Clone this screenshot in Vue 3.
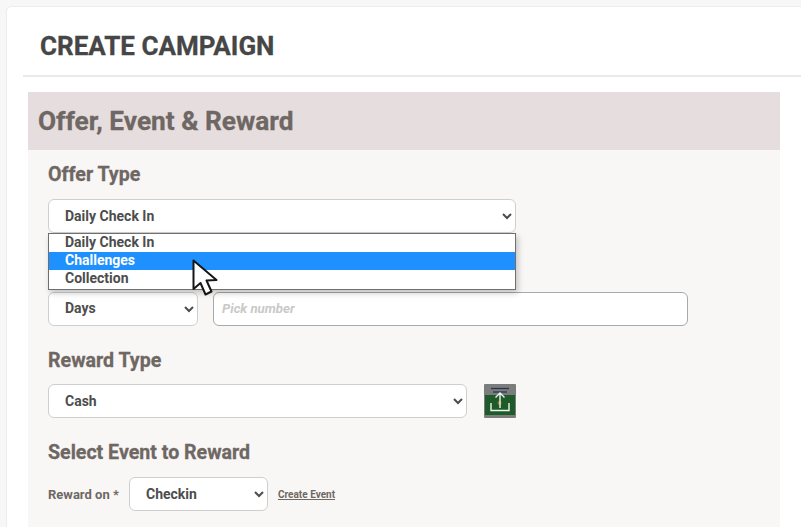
<script setup>
import { ref } from 'vue'

const offerTypes = ref(['Daily Check In', 'Challenges', 'Collection'])
const hovered = ref(1)
</script>

<template>
  <div class="page">
    <div class="card">
      <h1 class="title">CREATE CAMPAIGN</h1>

      <section class="panel">
        <h2 class="panel-head">Offer, Event &amp; Reward</h2>

        <div class="panel-body">
          <h3 class="label">Offer Type</h3>
          <div class="offer-wrap">
            <select class="ctl offer">
              <option>Daily Check In</option>
            </select>
            <ul class="menu">
              <li v-for="(o, i) in offerTypes" :key="o" :class="{ on: i === hovered }">{{ o }}</li>
            </ul>
            <svg class="cursor" width="26" height="37" viewBox="0 0 26 37">
              <path d="M1.5 1.5 L1.5 30 L8.5 24 L13.5 35.5 L19.5 32.5 L14.5 21.5 L24.5 21 Z" fill="#fff" stroke="#161616" stroke-width="2" stroke-linejoin="round" />
            </svg>
          </div>

          <div class="row days-row">
            <select class="ctl days">
              <option>Days</option>
            </select>
            <input class="ctl pick" type="text" placeholder="Pick number" />
          </div>

          <h3 class="label reward-label">Reward Type</h3>
          <div class="row reward-row">
            <select class="ctl reward">
              <option>Cash</option>
            </select>
            <svg class="upload" width="32" height="34" viewBox="0 0 32 34">
              <rect width="32" height="34" rx="1" fill="#7b7d7c" />
              <rect x="1" y="11" width="30" height="20" fill="#1d5c2a" />
              <path d="M7 4.5H25" stroke="#2a3550" stroke-width="1.3" />
              <path d="M9 8H23" stroke="#2a3550" stroke-width="1.3" />
              <circle cx="15.5" cy="19" r="2" fill="#8f7a22" />
              <path d="M16 24V9M11.5 13.5L16 9L20.5 13.5" fill="none" stroke="#f2f2ee" stroke-width="1.4" />
              <path d="M7 19V26.5H25V19" fill="none" stroke="#f2f2ee" stroke-width="1.4" />
            </svg>
          </div>

          <h3 class="label event-label">Select Event to Reward</h3>
          <div class="row event-row">
            <span class="small">Reward on *</span>
            <select class="ctl checkin">
              <option>Checkin</option>
            </select>
            <a class="create" href="#">Create Event</a>
          </div>
        </div>
      </section>
    </div>
  </div>
</template>

<style>
html, body {
  background: #f7f7f7;
}
</style>

<style scoped>
.page {
  height: 527px;
  overflow: hidden;
  padding: 6px 0 0 6px;
  box-sizing: border-box;
  font-family: Roboto, "Liberation Sans", sans-serif;
}
.card {
  height: 540px;
  background: #fff;
  border: 1px solid #ebecf1;
  border-radius: 5px;
  padding: 0 15px 0 16px;
  margin-right: -20px;
}
.title {
  margin: 0 0 0 17px;
  font-size: 26px;
  line-height: 29px;
  padding: 25px 0 14px;
  font-weight: 700;
  color: #464646;
  -webkit-text-stroke: 0.3px #464646;
}
.panel {
  border-top: 2px solid #e8eaee;
  padding: 15px 0 0 5px;
}
.panel-head {
  margin: 0;
  width: 742px;
  height: 58px;
  padding-left: 10px;
  background: #e6dede;
  font-size: 26.25px;
  line-height: 59px;
  font-weight: 700;
  color: #6e6763;
  -webkit-text-stroke: 0.3px #6e6763;
}
.panel-body {
  width: 732px;
  height: 400px;
  padding: 1px 0 0 20px;
  background: #f9f7f6;
}
.label {
  margin: 12px 0 0;
  font-size: 19.6px;
  line-height: 24px;
  font-weight: 700;
  color: #6e6763;
  -webkit-text-stroke: 0.3px #6e6763;
}
.ctl {
  box-sizing: border-box;
  height: 34px;
  background-color: #fff;
  border: 1px solid #cfcfcf;
  border-radius: 6px;
  font-family: inherit;
  font-size: 14px;
  font-weight: 700;
  color: #4d4d4d;
  padding: 0 12px;
  outline: none;
}
.offer-wrap {
  position: relative;
  margin-top: 12px;
  height: 93px;
}
.offer {
  width: 468px;
}
.menu {
  position: absolute;
  top: 34px;
  left: 0;
  box-sizing: border-box;
  width: 468px;
  height: 57px;
  margin: 0;
  padding: 0;
  list-style: none;
  background: #fff;
  border: 1px solid #6f6f6f;
  box-shadow: 2px 3px 6px rgba(0, 0, 0, 0.22);
  z-index: 2;
}
.menu li {
  height: 18px;
  line-height: 16px;
  padding-left: 16px;
  font-size: 14px;
  font-weight: 700;
  color: #4d4d4d;
}
.menu li.on {
  background: #1e90ff;
  color: #fff;
}
.cursor {
  position: absolute;
  top: 60px;
  left: 144px;
  z-index: 3;
}
.row {
  display: flex;
  align-items: center;
}
.days-row {
  gap: 15px;
}
.days {
  width: 150px;
  padding-bottom: 2px;
}
.pick {
  width: 475px;
  border-color: #a9a9a9;
  padding: 0 8px 2px;
}
.pick::placeholder {
  color: #c9c9c9;
  font-style: italic;
  font-size: 13.2px;
}
.reward-label {
  margin-top: 23px;
}
.reward-row {
  gap: 17px;
  margin-top: 11px;
}
.reward {
  width: 419px;
}
.upload {
  display: block;
}
.event-label {
  margin-top: 23px;
}
.event-row {
  margin-top: 12px;
}
.small {
  width: 81px;
  font-size: 13px;
  font-weight: 700;
  color: #6e6763;
}
.checkin {
  width: 139px;
  padding-left: 12px;
}
.create {
  margin-left: 10px;
  font-size: 10px;
  font-weight: 700;
  color: #6e6763;
}
</style>
